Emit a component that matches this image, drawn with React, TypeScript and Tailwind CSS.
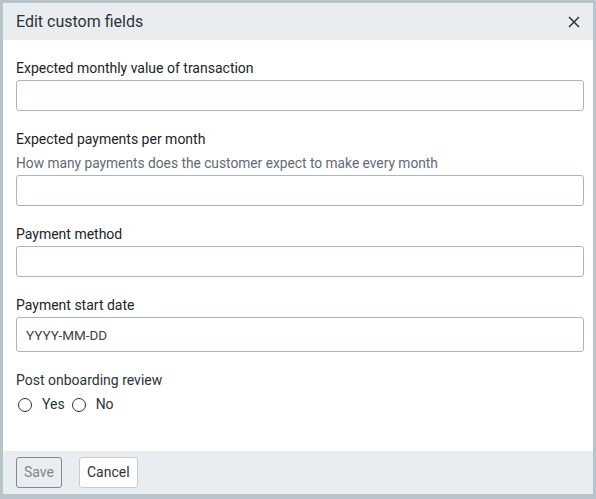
import React from "react";

function Field({ label, desc, placeholder, tall }: { label: string; desc?: string; placeholder?: string; tall?: boolean }) {
  return (
    <div className="flex flex-col">
      <label className="text-[14px] leading-[20px] font-normal text-[#1a242a]">{label}</label>
      {desc && <div className="mt-[4px] text-[13.75px] leading-[20px] text-[#5f6b73]">{desc}</div>}
      <input
        placeholder={placeholder}
        className={`mt-[2px] w-full rounded-[3px] border border-[#aab6bd] bg-white px-[9px] text-[13.5px] text-[#2a3439] placeholder:text-[#3a4449] outline-none ${tall ? "h-[35px]" : "h-[31px]"}`}
      />
    </div>
  );
}

function Radio({ label }: { label: string }) {
  return (
    <label className="flex items-center gap-[10px]">
      <span className="h-[14px] w-[14px] rounded-full border-[1.5px] border-[#2a3439] bg-white" />
      <span className="text-[14px] text-[#2a3439]">{label}</span>
    </label>
  );
}

export default function App() {
  return (
    <div
      className="h-[499px] w-[596px] bg-[#b7c4cb] p-[3px] pb-[5px]"
      style={{ fontFamily: "Roboto, 'Noto Sans', sans-serif" }}
    >
      <div className="flex h-full flex-col bg-white">
        <div className="flex h-[37px] items-center justify-between bg-[#e9edf0] pl-[13px] pr-[13px]">
          <span className="text-[16px] text-[#2a3439]">Edit custom fields</span>
          <svg width="12" height="12" viewBox="0 0 12 12" className="text-[#2a3439]">
            <path d="M1 1L11 11M11 1L1 11" stroke="currentColor" strokeWidth="1.5" />
          </svg>
        </div>
        <div className="flex flex-1 flex-col gap-[18px] pl-[13px] pr-[9px] pt-[18px]">
          <Field label="Expected monthly value of transaction" />
          <Field label="Expected payments per month" desc="How many payments does the customer expect to make every month" />
          <Field label="Payment method" />
          <Field label="Payment start date" placeholder="YYYY-MM-DD" tall />
          <div className="flex flex-col">
            <div className="text-[14px] leading-[20px] text-[#2a3439]">Post onboarding review</div>
            <div className="mt-[4px] flex items-center gap-[7px] pl-[2px]">
              <Radio label="Yes" />
              <Radio label="No" />
            </div>
          </div>
        </div>
        <div className="flex h-[43px] items-center gap-[17px] bg-[#e9edf0] px-[13px]">
          <button className="h-[31px] rounded-[3px] border border-[#7d8b94] px-[7px] text-[14px] text-[#7a878f]">Save</button>
          <button className="h-[31px] rounded-[3px] border border-[#c3ccd1] bg-white px-[7px] text-[14px] text-[#2a3439]">Cancel</button>
        </div>
      </div>
    </div>
  );
}
